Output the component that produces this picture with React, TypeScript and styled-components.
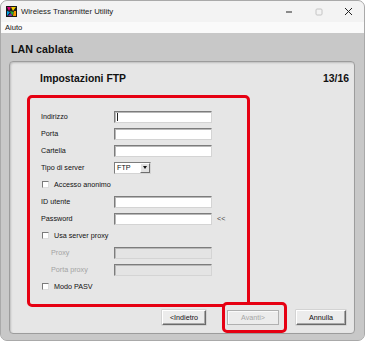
import React from "react";
import styled, { createGlobalStyle } from "styled-components";

const Global = createGlobalStyle`
  html, body { margin: 0; padding: 0; background: #ffffff; }
  body { font-family: "Liberation Sans", Arial, sans-serif; }
  * { box-sizing: border-box; }
`;

const Win = styled.div`
  width: 365px;
  height: 341px;
  border: 1px solid #a9a9a9;
  border-radius: 7px;
  overflow: hidden;
  display: flex;
  flex-direction: column;
  background: #c8c8c8;
`;

const TitleBar = styled.div`
  height: 21px;
  background: #f3f3f3;
  display: flex;
  align-items: center;
  padding-left: 5px;
  font-size: 7.8px;
  color: #1a1a1a;
`;

const TitleText = styled.span`
  margin-left: 4px;
  flex: 1;
`;

const Caption = styled.div<{ $w: number }>`
  width: ${(p) => p.$w}px;
  height: 21px;
  display: flex;
  align-items: center;
  justify-content: center;
`;

const MenuBar = styled.div`
  height: 12px;
  background: #fafafa;
  display: flex;
  align-items: center;
  padding-left: 4px;
  font-size: 7.6px;
  color: #111;
`;

const Body = styled.div`
  flex: 1;
  display: flex;
  flex-direction: column;
  padding: 9px 9px 6px 8px;
  background: #c8c8c8;
`;

const PageTitle = styled.div`
  font-size: 10.6px;
  font-weight: bold;
  line-height: 14px;
  height: 14px;
  margin: 0 0 5px 2px;
  color: #111;
  letter-spacing: 0.1px;
`;

const Panel = styled.div`
  flex: 1;
  background: #e6e6e6;
  border: 1px solid #9c9c9c;
  border-radius: 4px;
  box-shadow: inset 1px 1px 2px rgba(0, 0, 0, 0.18);
  display: flex;
  flex-direction: column;
`;

const PanelHeader = styled.div`
  display: flex;
  justify-content: space-between;
  align-items: center;
  padding: 10px 5px 0 30px;
  height: 23px;
  font-size: 10.4px;
  font-weight: bold;
  line-height: 13px;
  color: #111;
`;

const FormBox = styled.div`
  margin: 10px 0 0 17px;
  width: 223px;
  height: 212px;
  border: 3px solid #e60012;
  border-radius: 5px;
  padding: 10px 0 0 11px;
  display: grid;
  grid-template-columns: 73px 98px auto;
  grid-auto-rows: 17px;
  align-items: center;
`;

const Label = styled.span<{ $disabled?: boolean; $indent?: boolean }>`
  font-size: 7.2px;
  color: ${(p) => (p.$disabled ? "#a3a3a3" : "#111")};
  padding-left: ${(p) => (p.$indent ? "10px" : "0")};
  white-space: nowrap;
`;

const Input = styled.div<{ $disabled?: boolean }>`
  width: 98px;
  height: 12px;
  background: ${(p) => (p.$disabled ? "#e4e4e4" : "#ffffff")};
  border-top: 1px solid #7c7c7c;
  border-left: 1px solid #7c7c7c;
  border-right: 1px solid #d4d4d4;
  border-bottom: 1px solid #d4d4d4;
  box-shadow: inset 1px 1px 0 #b8b8b8;
  display: flex;
  align-items: center;
  padding-left: 2px;
`;

const Caret = styled.span`
  width: 1px;
  height: 8px;
  background: #222;
`;

const Select = styled.div`
  width: 37px;
  height: 12px;
  background: #fff;
  border-top: 1px solid #7c7c7c;
  border-left: 1px solid #7c7c7c;
  border-right: 1px solid #d4d4d4;
  border-bottom: 1px solid #d4d4d4;
  display: flex;
  align-items: center;
  justify-content: space-between;
  font-size: 7.2px;
  padding-left: 2px;
  color: #111;
`;

const DropBtn = styled.div`
  width: 10px;
  height: 10px;
  background: #e2e2e2;
  border-top: 1px solid #fff;
  border-left: 1px solid #fff;
  border-right: 1px solid #6e6e6e;
  border-bottom: 1px solid #6e6e6e;
  display: flex;
  align-items: center;
  justify-content: center;
  &::after {
    content: "";
    border-left: 2.5px solid transparent;
    border-right: 2.5px solid transparent;
    border-top: 3px solid #111;
  }
`;

const Extra = styled.span`
  font-size: 7.2px;
  color: #444;
  padding-left: 5px;
`;

const CheckRow = styled.label`
  grid-column: 1 / -1;
  display: flex;
  align-items: center;
  gap: 5px;
  padding-left: 1px;
`;

const Box = styled.span`
  width: 7px;
  height: 7px;
  background: #fff;
  border-top: 1px solid #7a7a7a;
  border-left: 1px solid #7a7a7a;
  border-right: 1px solid #dcdcdc;
  border-bottom: 1px solid #dcdcdc;
`;

const ButtonRow = styled.div`
  margin-top: -5px;
  height: 31px;
  display: flex;
  align-items: center;
  justify-content: flex-end;
  padding-right: 8px;
`;

const Button = styled.div<{ $w: number; $disabled?: boolean }>`
  width: ${(p) => p.$w}px;
  height: 15px;
  background: #ececec;
  border-top: 1px solid ${(p) => (p.$disabled ? "#b0b0b0" : "#ffffff")};
  border-left: 1px solid ${(p) => (p.$disabled ? "#b0b0b0" : "#ffffff")};
  border-right: 1px solid ${(p) => (p.$disabled ? "#b0b0b0" : "#6a6a6a")};
  border-bottom: 1px solid ${(p) => (p.$disabled ? "#b0b0b0" : "#6a6a6a")};
  box-shadow: ${(p) =>
    p.$disabled ? "inset 1px 1px 0 #fafafa" : "0 0 0 0.5px #c0c0c0, inset -1px -1px 0 #a8a8a8"};
  display: flex;
  align-items: center;
  justify-content: center;
  font-size: 7.2px;
  color: ${(p) => (p.$disabled ? "#a6a6a6" : "#111")};
`;

const Highlight = styled.div`
  position: relative;
  z-index: 1;
  height: 31px;
  margin: 0 9px 0 16px;
  padding: 5px 5px 5px 2px;
  border: 3px solid #e60012;
  border-radius: 5px;
  background: #e6e6e6;
  display: flex;
  align-items: center;
`;

const AppIcon = () => (
  <svg width="11" height="11" viewBox="0 0 11 11">
    <rect width="11" height="11" fill="#1a1a1a" />
    <polygon points="1,1 5,1 3,5" fill="#e4007f" />
    <polygon points="5,1 10,1 7,5" fill="#f5d000" />
    <polygon points="1,5 4,6 1,10" fill="#00a0e9" />
    <polygon points="4,5 8,6 6,10" fill="#22ac38" />
    <polygon points="8,5 10,5 10,10 7,10" fill="#f39800" />
    <polygon points="2,10 5,7 6,10" fill="#7a2fb0" />
  </svg>
);

const FormRow = ({
  label,
  disabled,
  indent,
  children,
  extra,
}: {
  label: string;
  disabled?: boolean;
  indent?: boolean;
  children: React.ReactNode;
  extra?: string;
}) => (
  <>
    <Label $disabled={disabled} $indent={indent}>
      {label}
    </Label>
    {children}
    <Extra>{extra ?? ""}</Extra>
  </>
);

const Check = ({ label }: { label: string }) => (
  <CheckRow>
    <Box />
    <Label>{label}</Label>
  </CheckRow>
);

export default function App() {
  return (
    <>
      <Global />
      <Win>
        <TitleBar>
          <AppIcon />
          <TitleText>Wireless Transmitter Utility</TitleText>
          <Caption $w={29}>
            <svg width="7" height="2" viewBox="0 0 7 2">
              <rect x="0" y="0.5" width="6" height="1" fill="#222" />
            </svg>
          </Caption>
          <Caption $w={29}>
            <svg width="8" height="8" viewBox="0 0 8 8">
              <rect x="1" y="1" width="6" height="6" rx="1" fill="none" stroke="#c4c4c4" strokeWidth="1" />
            </svg>
          </Caption>
          <Caption $w={31}>
            <svg width="9" height="9" viewBox="0 0 9 9">
              <path d="M1 1 L8 8 M8 1 L1 8" stroke="#222" strokeWidth="1" />
            </svg>
          </Caption>
        </TitleBar>
        <MenuBar>Aiuto</MenuBar>
        <Body>
          <PageTitle>LAN cablata</PageTitle>
          <Panel>
            <PanelHeader>
              <span>Impostazioni FTP</span>
              <span>13/16</span>
            </PanelHeader>
            <FormBox>
              <FormRow label="Indirizzo">
                <Input>
                  <Caret />
                </Input>
              </FormRow>
              <FormRow label="Porta">
                <Input />
              </FormRow>
              <FormRow label="Cartella">
                <Input />
              </FormRow>
              <FormRow label="Tipo di server">
                <Select>
                  FTP
                  <DropBtn />
                </Select>
              </FormRow>
              <Check label="Accesso anonimo" />
              <FormRow label="ID utente">
                <Input />
              </FormRow>
              <FormRow label="Password" extra="<<">
                <Input />
              </FormRow>
              <Check label="Usa server proxy" />
              <FormRow label="Proxy" disabled indent>
                <Input $disabled />
              </FormRow>
              <FormRow label="Porta proxy" disabled indent>
                <Input $disabled />
              </FormRow>
              <Check label="Modo PASV" />
            </FormBox>
            <ButtonRow>
              <Button $w={44}>&lt;Indietro</Button>
              <Highlight>
                <Button $w={52} $disabled>
                  Avanti&gt;
                </Button>
              </Highlight>
              <Button $w={50}>Annulla</Button>
            </ButtonRow>
          </Panel>
        </Body>
      </Win>
    </>
  );
}
